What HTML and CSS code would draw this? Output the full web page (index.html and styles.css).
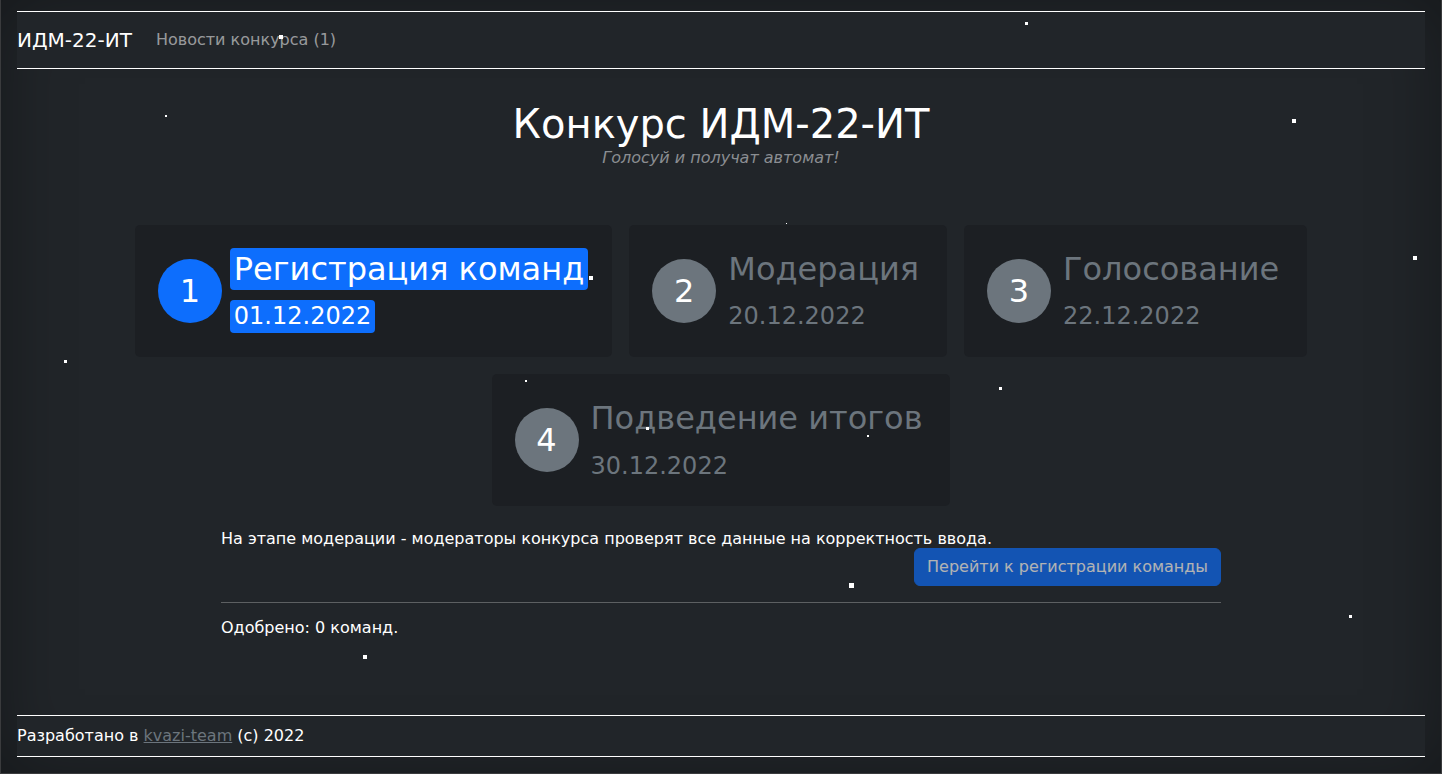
FILE: index.html
```html
<!DOCTYPE html>
<html lang="ru">
<head>
<meta charset="utf-8">
<title>Конкурс ИДМ-22-ИТ</title>
<link rel="stylesheet" href="styles.css">
</head>
<body>
<header class="topbar">
  <a class="brand" href="#">ИДМ-22-ИТ</a>
  <a class="nav-link" href="#">Новости конкурса (1)</a>
</header>
<main class="main">
  <div class="hero">
    <h1 class="hero-title">Конкурс ИДМ-22-ИТ</h1>
    <p class="hero-tagline">Голосуй и получат автомат!</p>
  </div>
  <div class="steps">
    <div class="step step-active">
      <div class="step-num">1</div>
      <div class="step-text">
        <span class="step-title">Регистрация команд</span>
        <span class="step-date">01.12.2022</span>
      </div>
    </div>
    <div class="step">
      <div class="step-num">2</div>
      <div class="step-text">
        <span class="step-title">Модерация</span>
        <span class="step-date">20.12.2022</span>
      </div>
    </div>
    <div class="step">
      <div class="step-num">3</div>
      <div class="step-text">
        <span class="step-title">Голосование</span>
        <span class="step-date">22.12.2022</span>
      </div>
    </div>
    <div class="step">
      <div class="step-num">4</div>
      <div class="step-text">
        <span class="step-title">Подведение итогов</span>
        <span class="step-date">30.12.2022</span>
      </div>
    </div>
  </div>
  <section class="info">
    <p class="info-text">На этапе модерации - модераторы конкурса проверят все данные на корректность ввода.</p>
    <div class="info-actions">
      <button class="btn-primary" type="button" disabled>Перейти к регистрации команды</button>
    </div>
    <hr class="divider">
    <p class="info-count">Одобрено: 0 команд.</p>
  </section>
</main>
<footer class="footer">
  <span>Разработано в <a class="footer-link" href="#">kvazi-team</a> (с) 2022</span>
</footer>
<div class="stars" aria-hidden="true">
  <span class="star s4" style="left:278px;top:35px"></span>
  <span class="star s3" style="left:1024px;top:22px"></span>
  <span class="star s2" style="left:164px;top:115px"></span>
  <span class="star s4" style="left:1291px;top:119px"></span>
  <span class="star s1" style="left:785px;top:223px"></span>
  <span class="star s4" style="left:1412px;top:256px"></span>
  <span class="star s3" style="left:63px;top:360px"></span>
  <span class="star s2" style="left:524px;top:380px"></span>
  <span class="star s3" style="left:998px;top:387px"></span>
  <span class="star s3" style="left:645px;top:427px"></span>
  <span class="star s2" style="left:866px;top:435px"></span>
  <span class="star s4" style="left:588px;top:276px"></span>
  <span class="star s5" style="left:848px;top:583px"></span>
  <span class="star s3" style="left:1348px;top:615px"></span>
  <span class="star s4" style="left:362px;top:655px"></span>
</div>
</body>
</html>
```
FILE: styles.css
```css
html, body {
  height: 100%;
}
* {
  box-sizing: border-box;
}
body {
  margin: 0;
  min-height: 100vh;
  position: relative;
  display: flex;
  flex-direction: column;
  padding: 11px 16px 16px;
  border: 1px solid #3a3b3d;
  border-top: 0;
  background: #212529;
  box-shadow: inset 0 0 70px rgba(0, 0, 0, 0.35);
  color: #ffffff;
  font-family: "DejaVu Sans", "Noto Sans", sans-serif;
  font-size: 16px;
  line-height: 1.5;
  overflow: hidden;
}

/* header */
.topbar {
  display: flex;
  align-items: center;
  height: 58px;
  border-top: 1px solid #ffffff;
  border-bottom: 1px solid #ffffff;
  background: #212529;
}
.brand {
  color: #ffffff;
  text-decoration: none;
  font-size: 20px;
  margin-right: 16px;
}
.nav-link {
  color: rgba(255, 255, 255, 0.55);
  text-decoration: none;
  padding: 0 8px;
}

/* main */
.main {
  flex: 1;
  display: flex;
  flex-direction: column;
  align-items: center;
}
.hero {
  margin-top: 31px;
  text-align: center;
}
.hero-title {
  margin: 0;
  font-size: 40px;
  font-weight: 400;
  line-height: 1.2;
}
.hero-tagline {
  margin: 0;
  font-size: 16px;
  font-style: italic;
  line-height: 19px;
  color: #8b8e92;
}

/* steps */
.steps {
  margin-top: 58px;
  width: 100%;
  display: flex;
  flex-wrap: wrap;
  justify-content: center;
  column-gap: 17px;
  row-gap: 17px;
}
.step {
  display: flex;
  align-items: center;
  padding: 23px 24px 23px 23px;
  background: #1c1f23;
  border-radius: 5px;
}
.step-num {
  width: 64px;
  height: 64px;
  flex: none;
  border-radius: 50%;
  background: #6c757d;
  color: #ffffff;
  font-size: 32px;
  line-height: 64px;
  text-align: center;
  margin-right: 8px;
}
.step-text {
  display: flex;
  flex-direction: column;
  align-items: flex-start;
  gap: 10px;
  padding-bottom: 1px;
  color: #6c757d;
}
.step-title {
  font-size: 32px;
  line-height: 1.2;
  padding: 2px 4px;
  border-radius: 4px;
}
.step-date {
  font-size: 24px;
  line-height: 1.2;
  padding: 2px 4px;
  border-radius: 4px;
}
.step-active .step-num {
  background: #0d6efd;
}
.step-active .step-title,
.step-active .step-date {
  background: #0d6efd;
  color: #ffffff;
}

/* info */
.info {
  width: 1000px;
  margin-top: 23px;
}
.info-text {
  margin: 0;
  font-size: 16px;
  line-height: 20px;
}
.info-actions {
  display: flex;
  justify-content: flex-end;
  margin-top: -1px;
}
.btn-primary {
  font-family: inherit;
  font-size: 16px;
  line-height: 24px;
  padding: 6px 12px;
  border: 1px solid #0d6efd;
  border-radius: 6px;
  background: #0d6efd;
  color: #ffffff;
  opacity: 0.65;
}
.divider {
  margin: 16px 0 0;
  border: 0;
  border-top: 1px solid rgba(255, 255, 255, 0.27);
}
.info-count {
  margin: 13px 0 0;
  font-size: 16px;
  line-height: 24px;
}

/* footer */
.footer {
  display: flex;
  align-items: center;
  height: 42px;
  border-top: 1px solid #ffffff;
  border-bottom: 1px solid #ffffff;
  background: #212529;
  font-size: 16px;
}
.footer-link {
  color: #6c757d;
}

/* stars */
.stars {
  position: absolute;
  inset: 0;
  pointer-events: none;
}
.star {
  position: absolute;
  background: #ffffff;
}
.s1 { width: 1px; height: 1px; }
.s2 { width: 2px; height: 2px; }
.s3 { width: 3px; height: 3px; }
.s4 { width: 4px; height: 4px; }
.s5 { width: 5px; height: 5px; }
```
